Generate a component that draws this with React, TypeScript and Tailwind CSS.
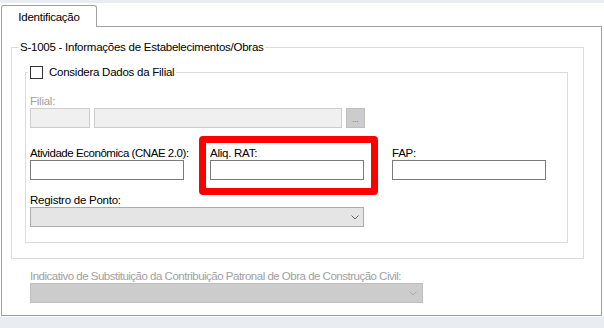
import React from "react";

function Chevron({ color }: { color: string }) {
  return (
    <svg width="8" height="5" viewBox="0 0 8 5" className="block">
      <polyline points="0.5,0.5 4,4 7.5,0.5" fill="none" stroke={color} strokeWidth="1" />
    </svg>
  );
}

export default function App() {
  return (
    <div className="w-[604px] h-[328px] overflow-hidden whitespace-nowrap bg-[#e9ecf1] font-['Liberation_Sans',Arial,sans-serif] text-[11.5px] tracking-[-0.25px] leading-[14px] text-black">
      <div className="mt-[3px] h-[314px] bg-white pt-[2px] pl-[1px]">
        {/* tab header */}
        <div className="flex">
          <div className="relative z-10 -mb-px flex h-[22px] w-[96px] items-center justify-center rounded-t-[3px] border border-b-0 border-[#a0a0a0] bg-white">
            Identificação
          </div>
        </div>
        {/* tab panel */}
        <div className="h-[290px] w-[601px] border border-[#a0a0a0] pt-[12px] pl-[9px]">
          <fieldset className="w-[573px] border border-[#dcdcdc] pb-[15px]">
            <legend className="ml-[7px] h-[16px] px-[1px] leading-[16px]">
              S-1005 - Informações de Estabelecimentos/Obras
            </legend>
            <fieldset className="ml-[13px] mt-[9px] w-[543px] border border-[#dcdcdc] pl-[4px] pb-[15px]">
              <legend className="-ml-[2px] flex h-[16px] items-center px-[2px] leading-[16px]">
                <span className="block h-[13px] w-[13px] border border-[#333333] bg-white" />
                <span className="ml-[6px]">Considera Dados da Filial</span>
              </legend>
              <div className="mt-[14px] text-[#a0a0a0]">Filial:</div>
              <div className="flex h-[20px]">
                <div className="h-[20px] w-[60px] border border-[#cccccc] bg-[#f0f0f0]" />
                <div className="ml-[4px] h-[20px] w-[248px] border border-[#cccccc] bg-[#f0f0f0]" />
                <div className="ml-[4px] flex h-[20px] w-[19px] items-end justify-center border border-[#bfbfbf] bg-[#cccccc] pb-[3px] text-[9px] leading-[9px] text-[#808080]">
                  ...
                </div>
              </div>
              <div className="mt-[18px] flex">
                <div className="w-[154px]">
                  <div className="tracking-[-0.45px]">Atividade Econômica (CNAE 2.0):</div>
                  <div className="h-[20px] w-[154px] border border-[#7a7a7a] bg-white" />
                </div>
                <div className="relative ml-[26px] w-[154px]">
                  <div>Aliq. RAT:</div>
                  <div className="h-[20px] w-[154px] border border-[#7a7a7a] bg-white" />
                  <div className="pointer-events-none absolute -left-[11px] -top-[10px] h-[59px] w-[179px] rounded-[4px] border-[7px] border-[#ff0000]" />
                </div>
                <div className="ml-[28px] w-[154px]">
                  <div>FAP:</div>
                  <div className="h-[20px] w-[154px] border border-[#7a7a7a] bg-white" />
                </div>
              </div>
              <div className="mt-[13px]">Registro de Ponto:</div>
              <div className="flex h-[20px] w-[334px] items-center justify-end border border-[#acacac] bg-[#e5e5e5] pr-[4px]">
                <Chevron color="#606060" />
              </div>
            </fieldset>
          </fieldset>
          <div className="ml-[19px] mt-[10px]">
            <div className="tracking-[-0.5px] text-[#a0a0a0]">
              Indicativo de Substituição da Contribuição Patronal de Obra de Construção Civil:
            </div>
            <div className="flex h-[20px] w-[393px] items-center justify-end border border-[#bfbfbf] bg-[#cccccc] pr-[5px]">
              <Chevron color="#a8a8a8" />
            </div>
          </div>
        </div>
      </div>
    </div>
  );
}
